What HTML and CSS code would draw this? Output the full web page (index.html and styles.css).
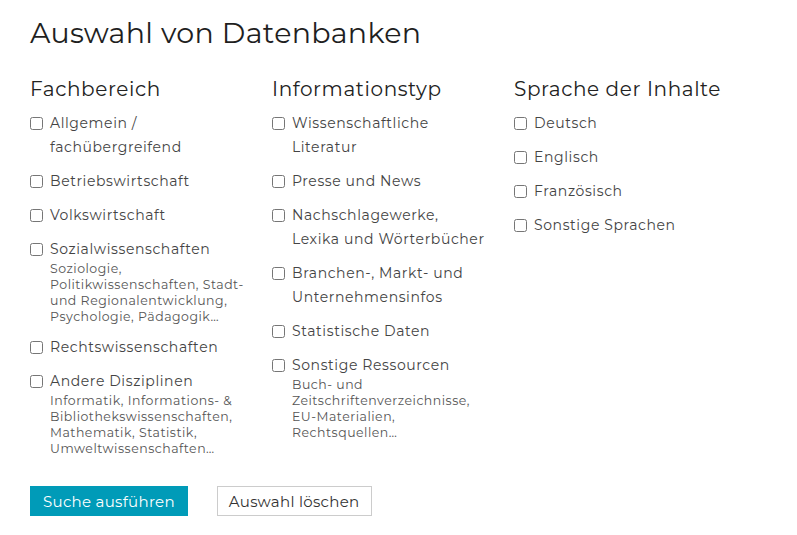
FILE: index.html
```html
<!DOCTYPE html>
<html lang="de">
<head>
    <meta charset="UTF-8">
    <meta name="viewport" content="width=device-width, initial-scale=1.0">
    <title>Auswahl von Datenbanken</title>
    <link rel="stylesheet" href="styles.css">
</head>
<body>
    <div class="db-select">
        <h1>Auswahl von Datenbanken</h1>
        <form class="filter-form">
            <div class="filter-columns">
                <div class="filter-group">
                    <h2>Fachbereich</h2>
                    <label class="option">
                        <input type="checkbox">
                        <span class="option-text">Allgemein / fachübergreifend</span>
                    </label>
                    <label class="option">
                        <input type="checkbox">
                        <span class="option-text">Betriebswirtschaft</span>
                    </label>
                    <label class="option">
                        <input type="checkbox">
                        <span class="option-text">Volkswirtschaft</span>
                    </label>
                    <label class="option">
                        <input type="checkbox">
                        <span class="option-text">Sozialwissenschaften
                            <small>Soziologie, Politikwissenschaften, Stadt- und Regionalentwicklung, Psychologie, Pädagogik…</small>
                        </span>
                    </label>
                    <label class="option">
                        <input type="checkbox">
                        <span class="option-text">Rechtswissenschaften</span>
                    </label>
                    <label class="option">
                        <input type="checkbox">
                        <span class="option-text">Andere Disziplinen
                            <small>Informatik, Informations- &amp; Bibliothekswissenschaften, Mathematik, Statistik, Umweltwissenschaften…</small>
                        </span>
                    </label>
                </div>

                <div class="filter-group">
                    <h2>Informationstyp</h2>
                    <label class="option">
                        <input type="checkbox">
                        <span class="option-text">Wissenschaftliche Literatur</span>
                    </label>
                    <label class="option">
                        <input type="checkbox">
                        <span class="option-text">Presse und News</span>
                    </label>
                    <label class="option">
                        <input type="checkbox">
                        <span class="option-text">Nachschlagewerke, Lexika und Wörterbücher</span>
                    </label>
                    <label class="option">
                        <input type="checkbox">
                        <span class="option-text">Branchen-, Markt- und Unternehmensinfos</span>
                    </label>
                    <label class="option">
                        <input type="checkbox">
                        <span class="option-text">Statistische Daten</span>
                    </label>
                    <label class="option">
                        <input type="checkbox">
                        <span class="option-text">Sonstige Ressourcen
                            <small>Buch- und Zeitschriftenverzeichnisse, EU-Materialien, Rechtsquellen…</small>
                        </span>
                    </label>
                </div>

                <div class="filter-group">
                    <h2>Sprache der Inhalte</h2>
                    <label class="option">
                        <input type="checkbox">
                        <span class="option-text">Deutsch</span>
                    </label>
                    <label class="option">
                        <input type="checkbox">
                        <span class="option-text">Englisch</span>
                    </label>
                    <label class="option">
                        <input type="checkbox">
                        <span class="option-text">Französisch</span>
                    </label>
                    <label class="option">
                        <input type="checkbox">
                        <span class="option-text">Sonstige Sprachen</span>
                    </label>
                </div>
            </div>

            <div class="form-actions">
                <button type="submit" class="btn-search">Suche ausführen</button>
                <button type="reset" class="btn-reset">Auswahl löschen</button>
            </div>
        </form>
    </div>
</body>
</html>
```

FILE: styles.css
```css
* {
    margin: 0;
    padding: 0;
    box-sizing: border-box;
    font-family: 'Montserrat', 'DejaVu Sans', sans-serif;
}

body {
    background: #fff;
    color: #333;
}

.db-select {
    padding: 15px 30px;
}

.db-select h1 {
    font-size: 28.5px;
    font-weight: 400;
    color: #1f1f1f;
    line-height: 36px;
    letter-spacing: 0.3px;
    margin-bottom: 24px;
}

.filter-columns {
    display: grid;
    grid-template-columns: 242px 242px 242px;
}

.filter-group h2 {
    font-size: 20px;
    font-weight: 400;
    color: #222;
    line-height: 28px;
    letter-spacing: 0.6px;
    margin-bottom: 8px;
}

.option {
    display: flex;
    align-items: flex-start;
    margin-bottom: 10px;
    cursor: pointer;
}

.option input {
    width: 13px;
    height: 13px;
    margin: 6px 7px 0 0;
    flex-shrink: 0;
}

.option-text {
    width: 198px;
    font-size: 14px;
    line-height: 24px;
    color: #444;
    letter-spacing: 0.6px;
}

.option-text small {
    display: block;
    font-size: 12.5px;
    line-height: 16px;
    color: #555;
    letter-spacing: 0.5px;
}

.form-actions {
    display: flex;
    align-items: center;
    gap: 29px;
    margin-top: 19px;
}

.btn-search {
    background: #009bb8;
    color: #fff;
    border: none;
    padding: 0 13px;
    height: 30px;
    font-size: 15px;
    letter-spacing: 0.3px;
    cursor: pointer;
}

.btn-reset {
    background: #fff;
    color: #333;
    border: 1px solid #ccc;
    padding: 0 11px;
    height: 30px;
    font-size: 15px;
    letter-spacing: 0.3px;
    cursor: pointer;
}
```
